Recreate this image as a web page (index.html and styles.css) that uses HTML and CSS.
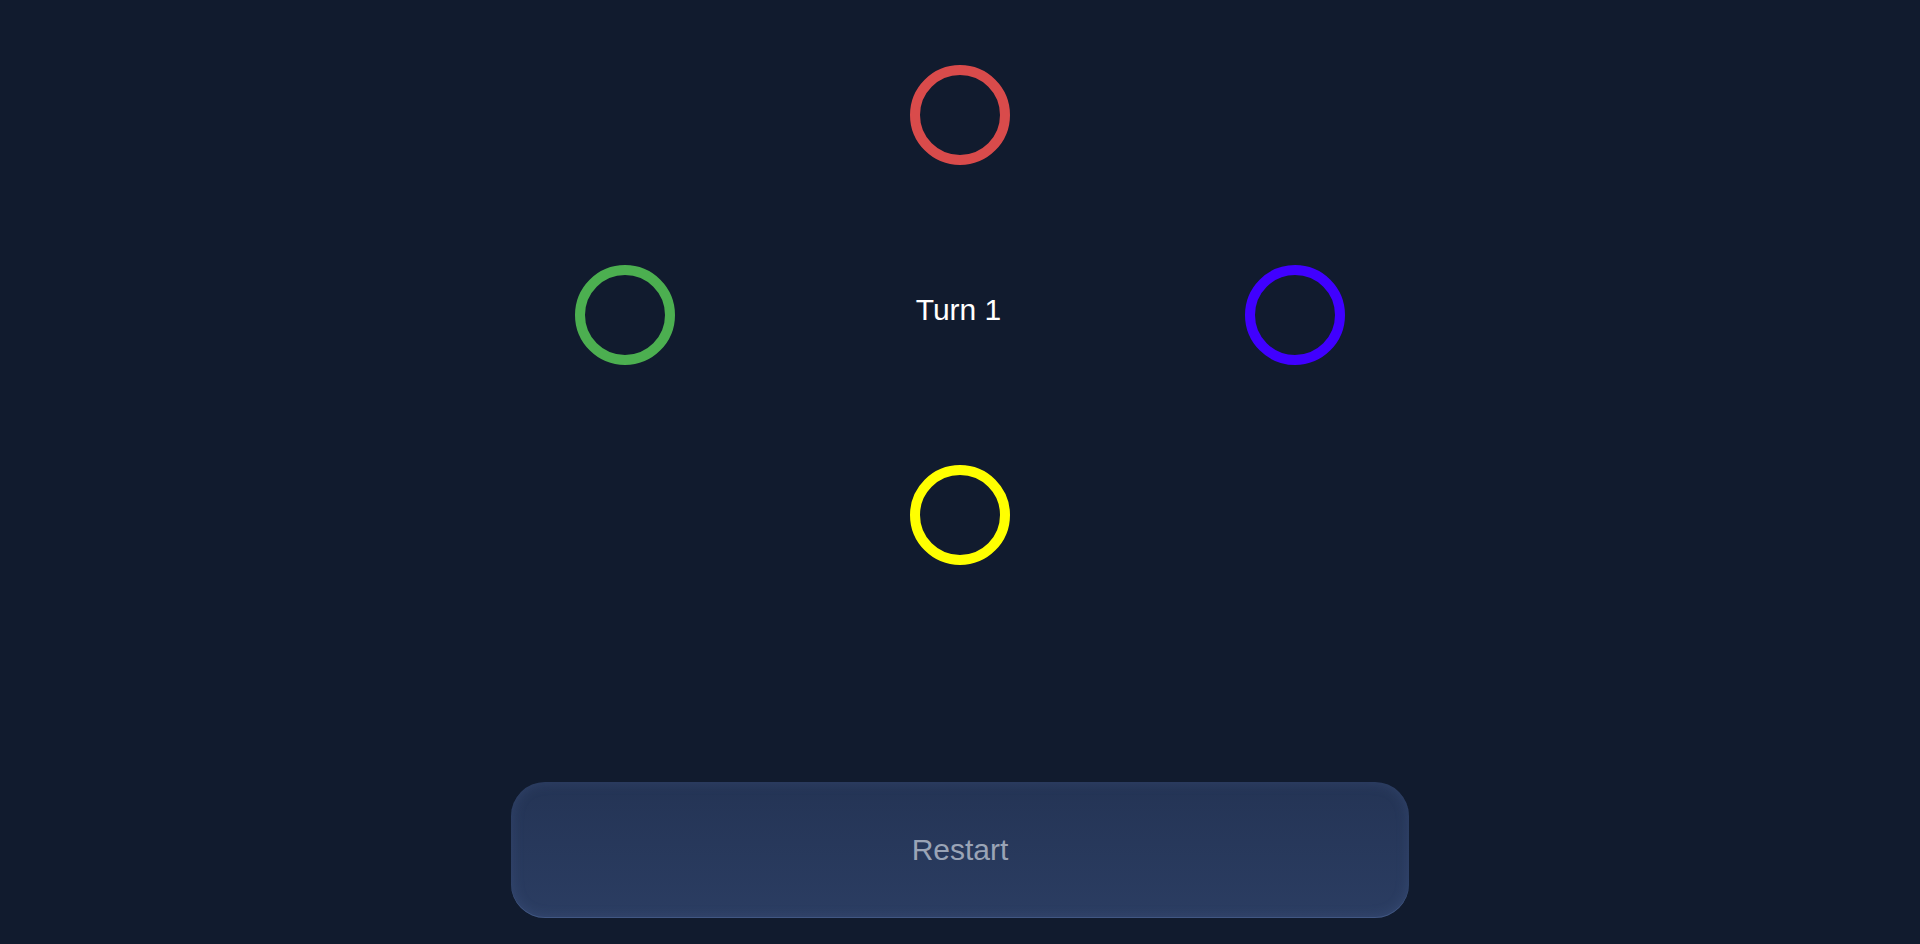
FILE: index.html
```html
<!DOCTYPE html>
<html lang="en">
<head>
<meta charset="utf-8">
<title>Turn</title>
<link rel="stylesheet" href="styles.css">
</head>
<body>
<main class="app">
  <div class="board">
    <div class="cell"></div>
    <div class="cell"><div class="ring ring-red"></div></div>
    <div class="cell"></div>
    <div class="cell"><div class="ring ring-green"></div></div>
    <div class="cell"><span class="turn">Turn 1</span></div>
    <div class="cell"><div class="ring ring-blue"></div></div>
    <div class="cell"></div>
    <div class="cell"><div class="ring ring-yellow"></div></div>
    <div class="cell"></div>
  </div>
  <button class="restart" type="button">Restart</button>
</main>
</body>
</html>
```
FILE: styles.css
```css
* { box-sizing: border-box; }
html, body {
  margin: 0;
  padding: 0;
  background: #111b2e;
  height: 100%;
  overflow: hidden;
}
body {
  font-family: "Liberation Sans", Arial, sans-serif;
}
.app {
  display: flex;
  flex-direction: column;
  align-items: center;
  padding-top: 65px;
}
.board {
  display: grid;
  grid-template-columns: repeat(3, 100px);
  grid-template-rows: repeat(3, 100px);
  column-gap: 235px;
  row-gap: 100px;
}
.cell {
  display: flex;
  align-items: center;
  justify-content: center;
}
.ring {
  width: 100px;
  height: 100px;
  border-radius: 50%;
  border: 10px solid;
}
.ring-red { border-color: #d94b4b; }
.ring-green { border-color: #4caf50; }
.ring-blue { border-color: #4000ff; }
.ring-yellow { border-color: #ffff00; }
.turn {
  color: #ffffff;
  font-size: 30px;
  white-space: nowrap;
  margin-bottom: 11px;
  margin-right: 3px;
}
.restart {
  margin-top: 217px;
  width: 898px;
  height: 136px;
  border: none;
  border-radius: 34px;
  background: linear-gradient(180deg, #243455 0%, #2b3d62 100%);
  box-shadow: inset 0 0 14px rgba(110, 140, 200, 0.18), inset 0 -1px 0 rgba(120, 150, 210, 0.25);
  color: #9aa4b6;
  font-family: "Liberation Sans", Arial, sans-serif;
  font-size: 30px;
  cursor: pointer;
}
```
